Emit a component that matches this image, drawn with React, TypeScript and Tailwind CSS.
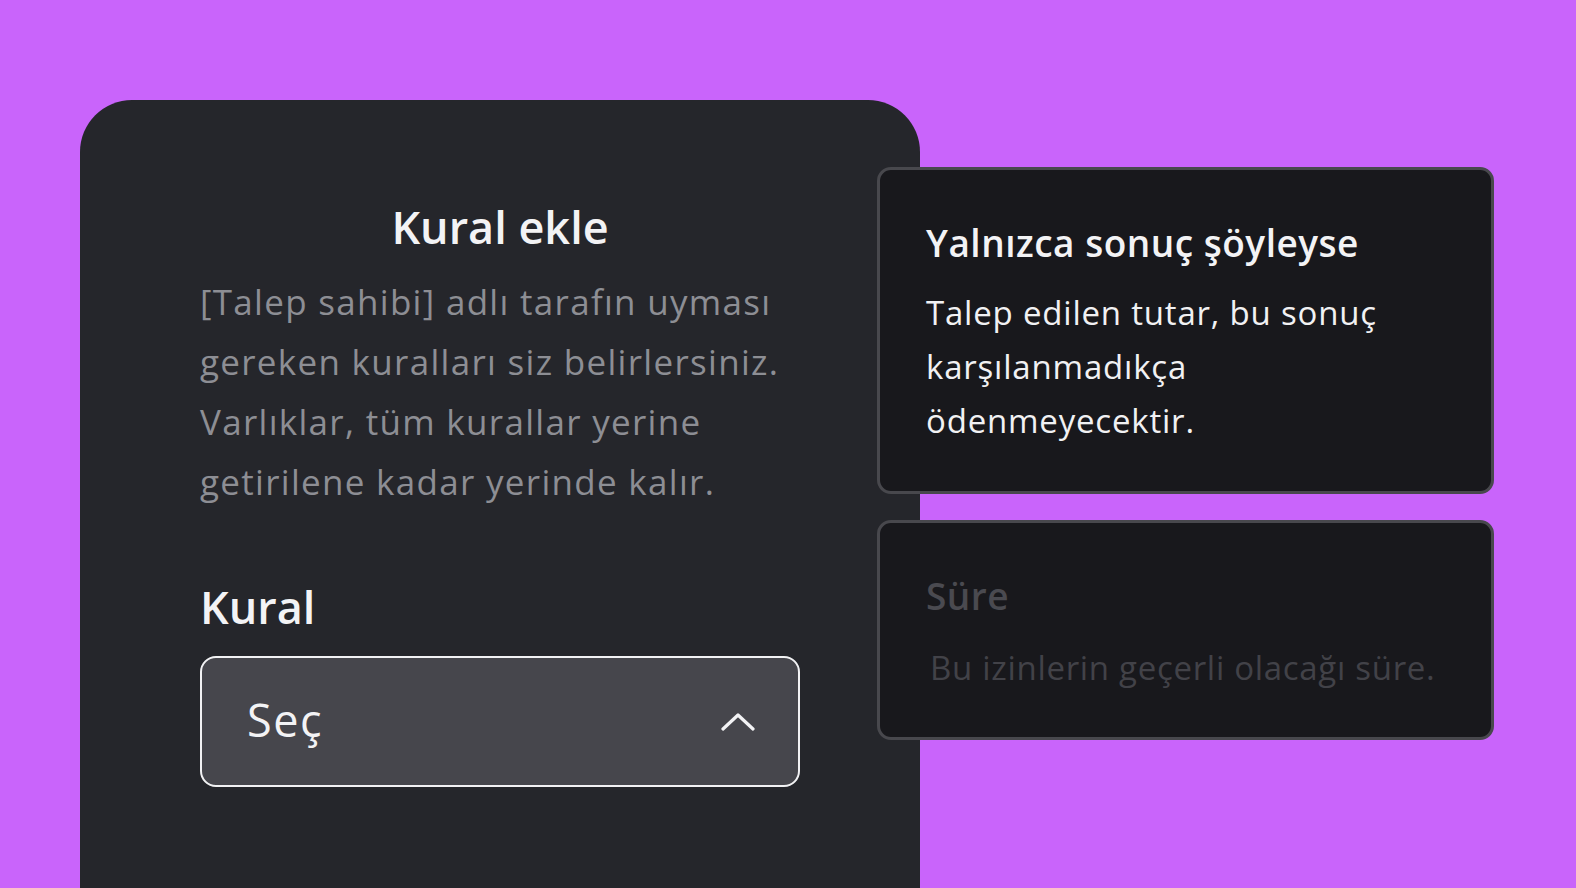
import React from "react";

export default function App() {
  return (
    <div
      className="w-[1576px] h-[888px] overflow-hidden bg-[#c964fb] flex items-start"
      style={{ fontFamily: "'Open Sans', 'Noto Sans', sans-serif", fontVariantLigatures: "none" }}
    >
      {/* Main panel */}
      <div className="ml-[80px] mt-[100px] w-[840px] h-[860px] shrink-0 rounded-[52px] bg-[#25262b] pt-[100px] px-[120px]">
        <h1 className="text-center text-[45px] leading-[54px] font-semibold text-[#f3f3f5]">
          Kural ekle
        </h1>
        <p className="mt-[18px] text-[35px] leading-[60px] tracking-[1.3px] text-[#8d8e94]">
          [Talep sahibi] adlı tarafın uyması
          <br />
          gereken kuralları siz belirlersiniz.
          <br />
          Varlıklar, tüm kurallar yerine
          <br />
          getirilene kadar yerinde kalır.
        </p>
        <div className="mt-[68px] text-[45px] leading-[54px] font-semibold text-[#f3f3f5]">
          Kural
        </div>
        <div className="mt-[22px] h-[131px] w-full rounded-[16px] border-2 border-[#f2f2f4] bg-[#46464c] flex items-center justify-between pl-[45px] pr-[43px]">
          <span className="mb-[3px] text-[45px] leading-[54px] font-medium tracking-[1.5px] text-[#f3f3f5]">
            Seç
          </span>
          <svg width="34" height="20" viewBox="0 0 34 20" fill="none">
            <path
              d="M2 17 L17 3 L32 17"
              stroke="#f3f3f5"
              strokeWidth="3.2"
              strokeLinecap="round"
              strokeLinejoin="round"
            />
          </svg>
        </div>
      </div>

      {/* Right cards */}
      <div className="relative z-10 ml-[-43px] mt-[167px] w-[617px] shrink-0 flex flex-col gap-[26px]">
        <div className="h-[327px] rounded-[14px] border-[3px] border-[#48484d] bg-[#18181c] pt-[51px] pl-[46px] pr-[30px]">
          <div className="text-[37px] leading-[44px] font-semibold tracking-[0.5px] text-[#f3f3f5]">
            Yalnızca sonuç şöyleyse
          </div>
          <p className="mt-[21px] text-[33px] leading-[54px] tracking-[0.8px] text-[#f1f1f3]">
            Talep edilen tutar, bu sonuç
            <br />
            karşılanmadıkça
            <br />
            ödenmeyecektir.
          </p>
        </div>
        <div className="h-[220px] rounded-[14px] border-[3px] border-[#48484d] bg-[#18181c] pt-[51px] pl-[46px] pr-[30px]">
          <div className="text-[37px] leading-[44px] font-semibold tracking-[0.5px] text-[#4a4a50]">
            Süre
          </div>
          <p className="mt-[23px] ml-[4px] text-[33px] leading-[54px] tracking-[0.7px] text-[#424248]">
            Bu izinlerin geçerli olacağı süre.
          </p>
        </div>
      </div>
    </div>
  );
}
